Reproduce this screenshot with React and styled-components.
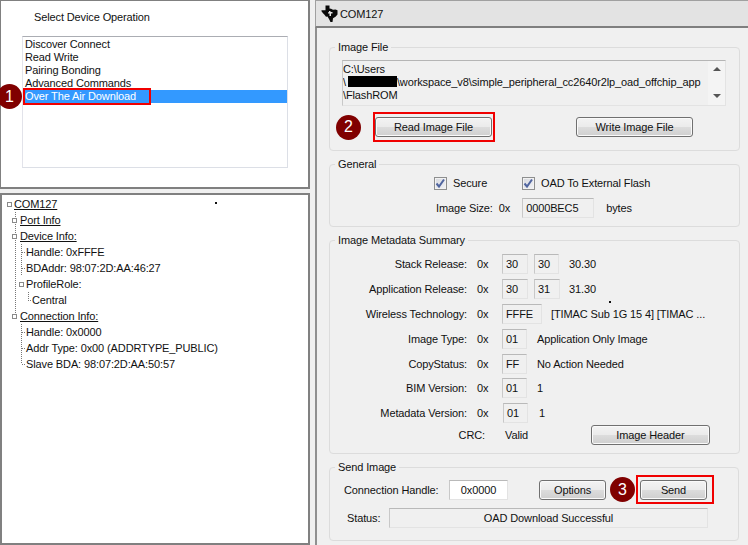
import styled, { createGlobalStyle } from 'styled-components';

const GlobalStyle = createGlobalStyle`
  html, body {
    margin: 0;
    padding: 0;
    height: 545px;
    overflow: hidden;
    background: #f0f0f0;
    color: #111;
    font-family: "Liberation Sans", Arial, sans-serif;
    font-size: 11px;
    letter-spacing: -0.12px;
  }
`

const Screen = styled.div`
  display: grid;
  grid-template-columns: 310px 1fr;
  column-gap: 5px;
  width: 748px;
  height: 545px;
  position: relative;
`

const LeftColumn = styled.div`
  display: flex;
  flex-direction: column;
  gap: 4px;
  height: 545px;
`

const OperationPanel = styled.div`
  height: 189px;
  box-sizing: border-box;
  background: #fff;
  border: 1px solid #808080;
  border-right-width: 2px;
  border-bottom-width: 2px;
  padding: 9px 0 0 21px;
`

const PanelTitle = styled.div`
  margin-left: 12px;
  height: 14px;
  line-height: 14px;
`

const ListBox = styled.div`
  box-sizing: border-box;
  width: 266px;
  height: 132px;
  margin-top: 12px;
  padding-top: 1px;
  border: 1px solid #dcdfe6;
  border-top-color: #abadb3;
  border-left-color: #e2e3ea;
`

const ListItem = styled.div`
  height: 13px;
  line-height: 13px;
  padding-left: 2px;
  white-space: nowrap;
  background: ${props => (props.$selected ? '#3399ff' : 'transparent')};
  color: ${props => (props.$selected ? '#fff' : '#111')};
`

const RedMark = styled.span`
  display: inline-block;
  width: 124px;
  height: 13px;
  outline: 2px solid #f00000;
`

const TreePanel = styled.div`
  flex: 1;
  box-sizing: border-box;
  background: #fff;
  border: 2px solid #808080;
  padding-top: 1px;
`

const TreeRow = styled.div`
  display: flex;
  align-items: center;
  height: 16px;
  white-space: nowrap;
`

const TreeLabel = styled.span`
  text-decoration: ${props => (props.$heading ? 'underline' : 'none')};
`

const RightColumn = styled.div`
  display: flex;
  flex-direction: column;
  height: 545px;
`

const TabBar = styled.div`
  display: flex;
  align-items: center;
  gap: 2px;
  height: 28px;
  box-sizing: border-box;
  padding-left: 5px;
  background: #e3e3e3;
  border: 1px solid #a0a0a0;
  border-bottom: 2px solid #7f7f7f;
  border-right: none;
`

const TabContent = styled.div`
  flex: 1;
  display: flex;
  flex-direction: column;
  gap: 6px;
  padding: 12px 0 0 12px;
  border-left: 2px solid #909090;
`

const Group = styled.fieldset`
  box-sizing: border-box;
  width: ${props => props.$width || 411}px;
  height: ${props => props.$height}px;
  margin: 0;
  padding: 0;
  border: 1px solid #dcdcdc;
  border-radius: 4px;
  min-width: 0;
`

const Legend = styled.legend`
  margin-left: 5px;
  padding: 0 3px;
  height: 14px;
  line-height: 14px;
`

const PathBox = styled.div`
  display: flex;
  box-sizing: border-box;
  width: 384px;
  height: 46px;
  margin: 6px 0 0 12px;
  border: 1px solid #e3e3e3;
  border-top-color: #b5b5b5;
  border-left-color: #c8c8c8;
`

const PathText = styled.div`
  flex: 1;
  padding: 2px 0 0 0;
  line-height: 13px;
  white-space: nowrap;
  overflow: hidden;
`

const Redacted = styled.span`
  display: inline-block;
  width: 49px;
  height: 11px;
  margin: 0 0 -1px 2px;
  background: #000;
`

const ScrollBar = styled.div`
  display: flex;
  flex-direction: column;
  justify-content: space-between;
  align-items: center;
  flex: none;
  width: 17px;
  padding: 6px 0 7px;
  box-sizing: border-box;
  background: #f4f4f4;
`

const ScrollArrow = styled.span`
  width: 0;
  height: 0;
  border-left: 4px solid transparent;
  border-right: 4px solid transparent;
  ${props => (props.$down ? 'border-top: 4px solid #555;' : 'border-bottom: 4px solid #555;')}
`

const ButtonRow = styled.div`
  display: flex;
  align-items: center;
  margin: 6px 0 0 6px;
`

const PushButton = styled.button`
  flex: none;
  box-sizing: border-box;
  width: ${props => props.$width}px;
  height: 20px;
  margin: 0;
  margin-left: ${props => props.$left || 0}px;
  padding: 0;
  font: inherit;
  letter-spacing: inherit;
  color: #111;
  border: 1px solid #707070;
  border-radius: 3px;
  background: linear-gradient(#f3f3f3 0%, #ebebeb 48%, #dcdcdc 52%, #cfcfcf 100%);
  box-shadow: inset 0 0 0 1px #fafafa;
`

const RedBox = styled.div`
  flex: none;
  display: flex;
  align-items: center;
  box-sizing: border-box;
  width: ${props => props.$width}px;
  height: ${props => props.$height}px;
  margin-left: ${props => props.$left || 0}px;
  padding-left: ${props => props.$inset}px;
  border: 2px solid #f00000;
`

const Badge = styled.div`
  flex: none;
  display: flex;
  align-items: center;
  justify-content: center;
  width: 25px;
  height: 25px;
  margin-left: ${props => props.$left || 0}px;
  border-radius: 50%;
  background: #800000;
  color: #fff;
  font-size: 16px;
`

const FirstBadge = styled(Badge)`
  position: absolute;
  left: -3px;
  top: 84px;
`

const Speck = styled.i`
  position: absolute;
  left: ${props => props.$x}px;
  top: ${props => props.$y}px;
  width: 2px;
  height: 2px;
  background: #111;
`

const CheckRow = styled.div`
  display: flex;
  align-items: center;
  height: 14px;
  margin: 5px 0 0 104px;
`

const CheckBox = styled.span`
  flex: none;
  display: flex;
  box-sizing: border-box;
  width: 13px;
  height: 13px;
  margin-right: 6px;
  border: 1px solid #8e8f8f;
  background: linear-gradient(135deg, #d6d8dd, #f2f3f7);
  box-shadow: inset 0 0 0 1px #f2f2f2;
`

const SecureNote = styled.span`
  flex: none;
  width: 69px;
`

const SizeRow = styled.div`
  display: flex;
  align-items: center;
  height: 20px;
  margin: 8px 0 0 106px;
`

const Field = styled.div`
  flex: none;
  display: flex;
  align-items: center;
  justify-content: ${props => (props.$center ? 'center' : 'flex-start')};
  box-sizing: border-box;
  width: ${props => props.$width}px;
  height: 20px;
  margin-left: ${props => props.$left || 0}px;
  padding-left: ${props => (props.$center ? 0 : 3)}px;
  background: ${props => (props.$white ? '#fff' : '#f0f0f0')};
  border: 1px solid #e3e3e3;
  border-top-color: #b9b9b9;
  border-left-color: #c8c8c8;
`

const Note = styled.span`
  flex: none;
  margin-left: ${props => props.$left || 0}px;
  white-space: nowrap;
`

const HexPrefix = styled.span`
  flex: none;
  box-sizing: border-box;
  width: 35px;
  padding-left: 10px;
`

const MetaRows = styled.div`
  margin-top: 5px;
`

const MetaRow = styled.div`
  display: flex;
  align-items: center;
  height: ${props => props.$height || 24.8}px;
`

const MetaLabel = styled.span`
  flex: none;
  width: ${props => props.$width || 137}px;
  text-align: right;
  white-space: nowrap;
`

const ValidValue = styled.span`
  flex: none;
  width: 86px;
  margin-left: 20px;
`

const SendRow = styled.div`
  display: flex;
  align-items: center;
  height: 29px;
  margin: 1px 0 0 14px;
`

const SendLabel = styled.span`
  flex: none;
  width: 105px;
  white-space: nowrap;
`

const StatusRow = styled.div`
  display: flex;
  align-items: center;
  height: 20px;
  margin: 4px 0 0 17px;
`

const StatusLabel = styled.span`
  flex: none;
  width: 42px;
`

const BOX_Y = 8

function TreeGuide({ width, lines = [], tick, box }) {
  // dotted connectors of one tree row, x values are page coordinates
  return (
    <svg width={width - 2} height="16" viewBox={`2 0 ${width - 2} 16`} style={{ flex: 'none' }}>
      {lines.map(([x, y1 = 0, y2 = 16]) => (
        <line key={x} x1={x + 0.5} x2={x + 0.5} y1={y1} y2={y2} stroke="#777" strokeDasharray="1 1" />
      ))}
      {tick && <line x1={tick[0]} x2={tick[1]} y1={BOX_Y + 0.5} y2={BOX_Y + 0.5} stroke="#777" strokeDasharray="1 1" />}
      {box !== undefined && <rect x={box + 0.5} y={BOX_Y - 2 + 0.5} width="4" height="4" fill="#fff" stroke="#8a8a8a" />}
    </svg>
  )
}

function TiLogo() {
  return (
    <svg width="17" height="17" viewBox="0 0 17 17" style={{ flex: 'none' }}>
      <path
        d="M4.5 0.5h4v3l1.5.3 2 1 2.5-.3 2 .8v4.2l-2 2.3-2.5 1.5-.5 3.7h-2l-1.5-3-1.5-2.5-1.5.3-1.5-2-1.5-1.5-1.5-2v-1h4z"
        fill="#0a0a0a"
      />
      <path d="M8 6h1.5v1h2v1.5h-1.5v2.5h-1.5v-2.5h-1.5v-1.2h1z" fill="#e3e3e3" />
    </svg>
  )
}

function Tick() {
  return (
    <svg width="11" height="11" viewBox="0 0 11 11">
      <path d="M1.5 5.5l2.5 3 5-7" fill="none" stroke="#50659f" strokeWidth="2" />
    </svg>
  )
}

function App() {
  const operations = ['Discover Connect', 'Read Write', 'Pairing Bonding', 'Advanced Commands']

  return (
    <Screen>
      <GlobalStyle />
      <LeftColumn>
        <OperationPanel>
          <PanelTitle>Select Device Operation</PanelTitle>
          <ListBox>
            {operations.map(op => <ListItem key={op}>{op}</ListItem>)}
            <ListItem $selected><RedMark>Over The Air Download</RedMark></ListItem>
          </ListBox>
        </OperationPanel>
        <TreePanel>
          <TreeRow>
            <TreeGuide width={14} box={7} lines={[]} />
            <TreeLabel $heading>COM127</TreeLabel>
          </TreeRow>
          <TreeRow>
            <TreeGuide width={20} box={12} lines={[[15]]} />
            <TreeLabel $heading>Port Info</TreeLabel>
          </TreeRow>
          <TreeRow>
            <TreeGuide width={20} box={12} lines={[[15]]} />
            <TreeLabel $heading>Device Info:</TreeLabel>
          </TreeRow>
          <TreeRow>
            <TreeGuide width={26} lines={[[15], [21]]} tick={[22, 25]} />
            <TreeLabel>Handle: 0xFFFE</TreeLabel>
          </TreeRow>
          <TreeRow>
            <TreeGuide width={26} lines={[[15], [21]]} tick={[22, 25]} />
            <TreeLabel>BDAddr: 98:07:2D:AA:46:27</TreeLabel>
          </TreeRow>
          <TreeRow>
            <TreeGuide width={26} box={19} lines={[[15]]} />
            <TreeLabel>ProfileRole:</TreeLabel>
          </TreeRow>
          <TreeRow>
            <TreeGuide width={32} lines={[[15], [28, 0, 8]]} tick={[28, 31]} />
            <TreeLabel>Central</TreeLabel>
          </TreeRow>
          <TreeRow>
            <TreeGuide width={20} box={12} lines={[[15, 0, 8]]} />
            <TreeLabel $heading>Connection Info:</TreeLabel>
          </TreeRow>
          <TreeRow>
            <TreeGuide width={26} lines={[[21]]} tick={[22, 25]} />
            <TreeLabel>Handle: 0x0000</TreeLabel>
          </TreeRow>
          <TreeRow>
            <TreeGuide width={26} lines={[[21]]} tick={[22, 25]} />
            <TreeLabel>Addr Type: 0x00 (ADDRTYPE_PUBLIC)</TreeLabel>
          </TreeRow>
          <TreeRow>
            <TreeGuide width={26} lines={[[21, 0, 8]]} tick={[22, 25]} />
            <TreeLabel>Slave BDA: 98:07:2D:AA:50:57</TreeLabel>
          </TreeRow>
        </TreePanel>
      </LeftColumn>

      <RightColumn>
        <TabBar>
          <TiLogo />
          <span>COM127</span>
        </TabBar>
        <TabContent>
          <Group $height={111}>
            <Legend>Image File</Legend>
            <PathBox>
              <PathText>
                C:\Users<br />
                \<Redacted />\workspace_v8\simple_peripheral_cc2640r2lp_oad_offchip_app<br />
                \FlashROM
              </PathText>
              <ScrollBar>
                <ScrollArrow />
                <ScrollArrow $down />
              </ScrollBar>
            </PathBox>
            <ButtonRow>
              <Badge>2</Badge>
              <RedBox $left={12} $width={122} $height={30} $inset={0}>
                <PushButton $width={117}>Read Image File</PushButton>
              </RedBox>
              <PushButton $left={81} $width={117}>Write Image File</PushButton>
            </ButtonRow>
          </Group>

          <Group $height={70}>
            <Legend>General</Legend>
            <CheckRow>
              <CheckBox><Tick /></CheckBox>
              <SecureNote>Secure</SecureNote>
              <CheckBox><Tick /></CheckBox>
              <Note>OAD To External Flash</Note>
            </CheckRow>
            <SizeRow>
              <Note>Image Size:</Note>
              <Note $left={6}>0x</Note>
              <Field $left={12} $width={72}>0000BEC5</Field>
              <Note $left={12}>bytes</Note>
            </SizeRow>
          </Group>

          <Group $height={221}>
            <Legend>Image Metadata Summary</Legend>
            <MetaRows>
              <MetaRow>
                <MetaLabel>Stack Release:</MetaLabel>
                <HexPrefix>0x</HexPrefix>
                <Field $width={26}>30</Field>
                <Field $left={6} $width={25}>30</Field>
                <Note $left={10}>30.30</Note>
              </MetaRow>
              <MetaRow>
                <MetaLabel>Application Release:</MetaLabel>
                <HexPrefix>0x</HexPrefix>
                <Field $width={26}>30</Field>
                <Field $left={6} $width={26}>31</Field>
                <Note $left={9}>31.30</Note>
              </MetaRow>
              <MetaRow>
                <MetaLabel>Wireless Technology:</MetaLabel>
                <HexPrefix>0x</HexPrefix>
                <Field $width={40}>FFFE</Field>
                <Note $left={9}>[TIMAC Sub 1G 15 4] [TIMAC ...</Note>
              </MetaRow>
              <MetaRow>
                <MetaLabel>Image Type:</MetaLabel>
                <HexPrefix>0x</HexPrefix>
                <Field $width={25}>01</Field>
                <Note $left={10}>Application Only Image</Note>
              </MetaRow>
              <MetaRow>
                <MetaLabel>CopyStatus:</MetaLabel>
                <HexPrefix>0x</HexPrefix>
                <Field $width={25}>FF</Field>
                <Note $left={10}>No Action Needed</Note>
              </MetaRow>
              <MetaRow>
                <MetaLabel>BIM Version:</MetaLabel>
                <HexPrefix>0x</HexPrefix>
                <Field $width={25}>01</Field>
                <Note $left={10}>1</Note>
              </MetaRow>
              <MetaRow>
                <MetaLabel>Metadata Version:</MetaLabel>
                <HexPrefix>0x</HexPrefix>
                <Field $left={1} $width={25}>01</Field>
                <Note $left={11}>1</Note>
              </MetaRow>
              <MetaRow $height={18}>
                <MetaLabel $width={155}>CRC:</MetaLabel>
                <ValidValue>Valid</ValidValue>
                <PushButton $width={119}>Image Header</PushButton>
              </MetaRow>
            </MetaRows>
          </Group>

          <Group $height={81} $width={410}>
            <Legend>Send Image</Legend>
            <SendRow>
              <SendLabel>Connection Handle:</SendLabel>
              <Field $width={59} $white $center>0x0000</Field>
              <PushButton $left={31} $width={67}>Options</PushButton>
              <Badge $left={4}>3</Badge>
              <RedBox $left={1} $width={78} $height={29} $inset={2}>
                <PushButton $width={67}>Send</PushButton>
              </RedBox>
            </SendRow>
            <StatusRow>
              <StatusLabel>Status:</StatusLabel>
              <Field $width={319} $center>OAD Download Successful</Field>
            </StatusRow>
          </Group>
        </TabContent>
      </RightColumn>

      <FirstBadge>1</FirstBadge>
      <Speck $x={215} $y={202} />
      <Speck $x={609} $y={301} />
    </Screen>
  )
}

export default App
